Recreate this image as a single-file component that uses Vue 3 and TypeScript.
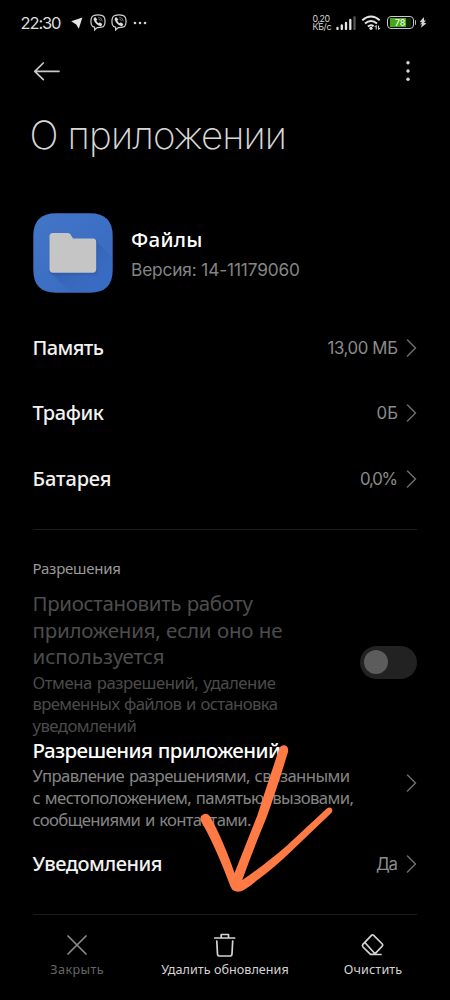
<script setup lang="ts">
import type { Directive } from 'vue'

interface InfoRow {
  label: string
  labelWidth: number
  value: string
  valueWidth: number
}

interface Line {
  text: string
  width: number
}

/* Tracks a single line of text out (or in) so that it occupies the given width. */
const vFit: Directive<HTMLElement, number> = {
  mounted(el, { value }) {
    const length = (el.textContent ?? '').trim().length
    if (length < 2) return
    const spacing = (value - el.getBoundingClientRect().width) / (length - 1)
    el.style.letterSpacing = `${spacing.toFixed(3)}px`
    el.style.marginRight = `${(-spacing).toFixed(3)}px`
  },
}

const rows: InfoRow[] = [
  { label: 'Память', labelWidth: 71.5, value: '13,00 МБ', valueWidth: 70.5 },
  { label: 'Трафик', labelWidth: 71.5, value: '0Б', valueWidth: 21.5 },
  { label: 'Батарея', labelWidth: 79, value: '0,0%', valueWidth: 38 },
]

const pauseTitle: Line[] = [
  { text: 'Приостановить работу', width: 220.5 },
  { text: 'приложения, если оно не', width: 250 },
  { text: 'используется', width: 132 },
]

const pauseText: Line[] = [
  { text: 'Отмена разрешений, удаление', width: 243.5 },
  { text: 'временных файлов и остановка', width: 245.5 },
  { text: 'уведомлений', width: 104.5 },
]

const permissionText: Line[] = [
  { text: 'Управление разрешениями, связанными', width: 317.5 },
  { text: 'с местоположением, памятью, вызовами,', width: 321.5 },
  { text: 'сообщениями и контактами.', width: 219 },
]
</script>

<template>
  <main class="screen">
    <header class="status">
      <span v-fit="41" class="clock">22:30</span>
      <svg class="plane" width="12" height="12" viewBox="0 0 12 12"><path d="M.2 4.200 11.400.6 7.800 11.800 5.200 7.400Z" /></svg>
      <svg v-for="n in 2" :key="n" class="viber" width="16" height="17" viewBox="0 0 16 17">
        <path class="bubble" d="M4.200 1.300Q8 .5 11.800 1.300 14.200 1.900 14.700 4.300 15.300 7.300 14.700 10.300 14.100 12.700 11.600 13.200 9.500 13.700 7.200 13.600L4.600 16V13.200Q1.900 12.700 1.300 10.300.6 7.300 1.300 4.300 1.900 1.800 4.200 1.300Z" />
        <path class="phone" d="M4.300 3.500 5.500 3.200 7.200 5.600 6.300 6.700Q6.900 8.400 8.800 9.300L9.800 8.300 12.200 10 11.900 11.300 10.600 12.200Q5.400 10.700 3.500 5.200Z" />
        <path class="waves" d="M8.200 3.200Q12 3.500 12.300 7.300M8.400 5Q10.300 5.200 10.500 7.200" />
      </svg>
      <svg class="more" width="14" height="4" viewBox="0 0 14 4"><circle cx="2" cy="2" r="1.300" /><circle cx="7" cy="2" r="1.300" /><circle cx="12" cy="2" r="1.300" /></svg>
      <div class="status-right">
        <div class="speed"><span v-fit="17.5">0,20</span><span v-fit="19">КБ/с</span></div>
        <svg class="signal" width="20" height="14" viewBox="0 0 20 14">
          <path d="M1.500 13V11.800M5.800 13V9.500M10 13V7M14.300 13V4" /><path class="faint" d="M18.500 13V1.500" />
        </svg>
        <svg class="wifi" width="20" height="16" viewBox="0 0 20 16">
          <path d="M1.300 5.300Q10-2.200 18.700 5.300M4 8.600Q10 3.500 16 8.600M6.900 11.600Q10 9 12.600 11.300" />
          <circle cx="10" cy="13.300" r="1.600" />
          <path class="traffic" d="M15.200 14.500V10.500L13.600 12.100M17.600 10.700V14.500L19.200 12.900" />
        </svg>
        <div class="battery"><div class="case"><span>78</span></div><i></i></div>
        <svg class="bolt" width="8" height="13" viewBox="0 0 9 13"><path d="M5.500.4.8 5.800 3.700 6.600 1 8.400 3.300 8.600 2.100 12.500 8.200 7.500 5.400 6.600 8.100 4.400 5.700 4.200Z" /></svg>
      </div>
    </header>

    <nav class="toolbar">
      <svg width="28" height="20" viewBox="0 0 28 20"><path d="M26 10.300H2M10.300 2 1.800 10.300 10.300 18.600" /></svg>
      <svg class="dots" width="6" height="22" viewBox="0 0 6 22"><circle cx="3" cy="2.700" r="1.700" /><circle cx="3" cy="11" r="1.700" /><circle cx="3" cy="19.300" r="1.700" /></svg>
    </nav>

    <h1><span v-fit="257.5">О приложении</span></h1>

    <section class="app">
      <svg class="app-icon" width="80" height="80" viewBox="0 0 80 80">
        <defs>
          <linearGradient id="tile" x1="0" y1="0" x2="1" y2="1"><stop offset="0" stop-color="#4376c6" /><stop offset="1" stop-color="#376ac2" /></linearGradient>
          <linearGradient id="shade" x1="0.2" y1="0.2" x2="1" y2="1"><stop offset="0" stop-color="#2b5099" stop-opacity=".6" /><stop offset=".8" stop-color="#376ac2" stop-opacity="0" /></linearGradient>
          <clipPath id="shape"><path d="M23 .3H57Q79.700.3 79.700 23V57Q79.700 79.700 57 79.700H23Q.3 79.700.3 57V23Q.3.3 23 .3Z" /></clipPath>
          <filter id="soft" x="-20%" y="-20%" width="140%" height="140%"><feGaussianBlur stdDeviation="1.200" /></filter>
        </defs>
        <g clip-path="url(#shape)">
          <rect width="80" height="80" fill="url(#tile)" />
          <path d="M62 27 86 51V86H44L18 60Z" fill="url(#shade)" />
          <path d="M17 27H63.500V61H17Z" fill="#284d91" opacity=".5" filter="url(#soft)" />
          <path d="M20 20H35Q36.700 20 37.600 21.500L40 25.500H60Q63.200 25.500 63.200 29V56Q63.200 59.700 60 59.700H20Q16.500 59.700 16.500 56V23.500Q16.500 20 20 20Z" fill="#c5c5c5" />
        </g>
      </svg>
      <div class="app-text">
        <h2><span v-fit="71.5">Файлы</span></h2>
        <p><span v-fit="169">Версия: 14-11179060</span></p>
      </div>
    </section>

    <section class="rows">
      <div v-for="row in rows" :key="row.label" class="row">
        <span v-fit="row.labelWidth" class="label">{{ row.label }}</span>
        <span class="value"><span v-fit="row.valueWidth">{{ row.value }}</span></span>
        <svg class="chevron" width="12" height="18" viewBox="0 0 12 18"><path d="M1.500 1 9.500 9 1.500 17" /></svg>
      </div>
    </section>

    <hr class="rule">

    <h3><span v-fit="88.5">Разрешения</span></h3>

    <section class="block disabled">
      <div class="copy">
        <p class="heading"><span v-for="line in pauseTitle" :key="line.text" v-fit="line.width">{{ line.text }}</span></p>
        <p class="note"><span v-for="line in pauseText" :key="line.text" v-fit="line.width">{{ line.text }}</span></p>
      </div>
      <div class="toggle"><i></i></div>
    </section>

    <section class="block">
      <div class="copy">
        <p class="heading strong"><span v-fit="248.5">Разрешения приложений</span></p>
        <p class="note"><span v-for="line in permissionText" :key="line.text" v-fit="line.width">{{ line.text }}</span></p>
      </div>
      <svg class="chevron" width="12" height="18" viewBox="0 0 12 18"><path d="M1.500 1 9.500 9 1.500 17" /></svg>
    </section>

    <div class="row last">
      <span v-fit="130" class="label">Уведомления</span>
      <span class="value"><span v-fit="22">Да</span></span>
      <svg class="chevron" width="12" height="18" viewBox="0 0 12 18"><path d="M1.500 1 9.500 9 1.500 17" /></svg>
    </div>

    <footer>
      <div class="action muted">
        <svg width="26" height="26" viewBox="0 0 26 26"><path d="M4 4 22 22M22 4 4 22" /></svg>
        <span v-fit="53.5">Закрыть</span>
      </div>
      <div class="action">
        <svg width="26" height="26" viewBox="0 0 26 26"><path d="M2.800 6H22.700M9.200 6V2.500H16.500V6M4.800 9 5.500 22Q5.600 24 7.600 24H17.900Q19.900 24 20 22L20.700 9" /></svg>
        <span v-fit="127.5">Удалить обновления</span>
      </div>
      <div class="action">
        <svg width="26" height="26" viewBox="0 0 26 26"><path d="M13.400 3.200 22.300 12Q23.200 13 22.300 14L14.500 22.300H10.500L3 15Q1.800 13.500 2.900 12.300L11.700 3.200Q12.500 2.400 13.400 3.200ZM5.300 11 14.800 21.500M10.500 22.500H21" /></svg>
        <span v-fit="58.5">Очистить</span>
      </div>
    </footer>

    <svg class="arrow" width="150" height="165" viewBox="190 735 150 165">
      <path d="M279.700 747.500Q281.700 744.600 285 745.300 289 747 288 752C281 775 274 797 266.300 818Q253 850 242.300 880C257 870 272 858.500 286.700 845.700L326.800 808.500Q329.800 806.400 331.700 808.600 333.200 810.800 331 813.300L291 851.500Q274 868 256.500 880.700 248 888 241 891.300 236.500 892.600 233 890.300 231.500 889 230.500 886.500C222.500 865 213 842 201.200 821.500Q198.800 817 203 814.400 207.500 812.600 210.300 816.800C219.500 834 227.500 852 234.500 873L257.500 815Q269 779 279.700 747.500Z" />
    </svg>
  </main>
</template>

<style>
body {
  margin: 0;
  background: #000;
}
</style>

<style scoped>
.screen {
  position: relative;
  box-sizing: border-box;
  width: 450px;
  height: 1000px;
  overflow: hidden;
  background: #000;
  color: #e9e9e9;
  font-family: "Noto Sans", sans-serif;
}
svg { flex: none; display: block; }
h1, h2, h3, p { margin: 0; font-weight: 400; }
h1 span, h2 span, h3 span, p span, .row span, .action span, .clock, .speed span {
  display: block;
  width: max-content;
  white-space: pre;
}

.status {
  display: flex;
  align-items: center;
  height: 44px;
  padding: 1px 23px 0 20.500px;
  box-sizing: border-box;
}
.clock { font-family: Inter, sans-serif; font-size: 16.500px; line-height: 20px; color: #dedede; }
.plane { margin-left: 9.500px; fill: #e6e6e6; }
.viber { margin-left: 8px; margin-right: -3px; fill: none; stroke: #d0d0d0; stroke-width: 1.200; }
.viber + .viber { margin-left: 8px; }
.plane + .viber { margin-left: 7.500px; }
.viber .phone { fill: #dedede; stroke: none; }
.viber .waves { stroke-width: .8; stroke: #8b8b8b; }
.more { margin-left: 9px; fill: #d0d0d0; }
.status-right { display: flex; align-items: center; margin-left: auto; }
.speed { font-family: Inter, "Noto Sans", sans-serif; font-size: 8.800px; line-height: 8px; color: #d6d6d6; margin-right: 4px; }
.speed span { height: 8px; }
.signal { fill: none; stroke: #e4e4e4; stroke-width: 2.300; stroke-linecap: round; }
.signal .faint { stroke: #555; }
.wifi { margin-left: 5px; fill: #e4e4e4; }
.wifi path { fill: none; stroke: #e4e4e4; stroke-width: 2; }
.wifi .traffic { stroke-width: 1; }
.battery { display: flex; align-items: center; margin-left: 6px; }
.battery i { width: 1.500px; height: 5px; background: #bdbdbd; margin-left: 1px; border-radius: 0 1px 1px 0; }
.case {
  box-sizing: border-box;
  width: 27px;
  height: 13px;
  border: 1.500px solid #c9c9c9;
  border-radius: 4px;
  background: linear-gradient(90deg, #43a813 0 16.500px, #102a06 16.500px) 2px 1px / 21px 9px no-repeat;
  text-align: center;
  font: 500 9px/11px Inter, sans-serif;
  color: #fff;
}
.bolt { margin-left: 3px; fill: #d5d5d5; }

.toolbar {
  display: flex;
  align-items: center;
  justify-content: space-between;
  height: 54px;
  padding: 0 39.300px 0 32.500px;
  fill: none;
  stroke: #c9c9c9;
  stroke-width: 1.700;
  stroke-linecap: round;
  stroke-linejoin: round;
}
.dots { fill: #d9d9d9; stroke: none; }

h1 {
  padding: 14px 0 0 29.500px;
  font-family: Inter, "Noto Sans", sans-serif;
  font-size: 38.500px;
  line-height: 46px;
  font-weight: 200;
  color: #d8d8d8;
}

.app { display: flex; align-items: center; gap: 18.500px; height: 80px; padding: 55px 33px 0 32.500px; }
.app-text { padding-top: 1px; }
h2 { font-size: 20.500px; line-height: 30px; font-weight: 500; color: #fff; }
.app-text p { font-family: Inter, "Noto Sans", sans-serif; font-size: 17.300px; line-height: 26px; color: #858585; padding-top: 3px; }

.rows { padding-top: 22px; }
.row { display: flex; align-items: center; height: 65.500px; padding: 0 32px 0 32.500px; }
.label { font-size: 20px; line-height: 26px; font-weight: 500; color: #f2f2f2; }
.value { margin-left: auto; font-family: Inter, "Noto Sans", sans-serif; font-size: 16.800px; line-height: 24px; color: #8c8c8c; }
.chevron { margin-left: 8px; fill: none; stroke: #6d6d6d; stroke-width: 1.500; stroke-linecap: round; stroke-linejoin: round; }

.rule { width: 384px; height: 1px; border: 0; margin: 17.500px 0 0 33px; background: #1c1c1c; }
h3 { padding: 28px 0 0 32.500px; font-size: 15px; line-height: 20px; color: #999; }

.block { display: flex; align-items: center; justify-content: space-between; padding: 0 32px 0 32.500px; }
.heading { font-size: 20.500px; line-height: 26.600px; color: #4d4d4d; word-spacing: .5px; }
.note { padding-top: 1.800px; font-size: 16.700px; line-height: 21.800px; color: #858585; word-spacing: 1px; }
.heading.strong { font-weight: 500; color: #fff; }
.disabled { padding-top: 12px; }
.disabled .note { color: #4b4b4b; }
.toggle { display: flex; align-items: center; width: 57px; height: 33px; border-radius: 17px; background: #222; box-sizing: border-box; padding-left: 4px; margin: -2.500px 1px 0 0; }
.toggle i { width: 24px; height: 24px; border-radius: 50%; background: #5c5c5c; }
.block > .chevron { margin-top: -2px; }
.last .label, .last .value { padding-top: 1px; }

footer {
  display: grid;
  grid-template-columns: 1fr 1fr 1fr;
  width: 384px;
  margin: 17.500px 0 0 33px;
  border-top: 1px solid #1a1a1a;
  padding-top: 17.500px;
}
.action {
  display: flex;
  flex-direction: column;
  align-items: center;
  gap: 2.500px;
  font-size: 12.600px;
  line-height: 18px;
  color: #d4d4d4;
}
.action:first-child { margin: 0 20px 0 -20px; }
.action:last-child { margin: 0 -20px 0 20px; }
.action svg { fill: none; stroke: currentColor; stroke-width: 1.700; stroke-linecap: round; stroke-linejoin: round; }
.muted { color: #666; }
.muted svg { stroke: #8a8a8a; }

.arrow { position: absolute; left: 190px; top: 735px; fill: #ff7a45; }
</style>
